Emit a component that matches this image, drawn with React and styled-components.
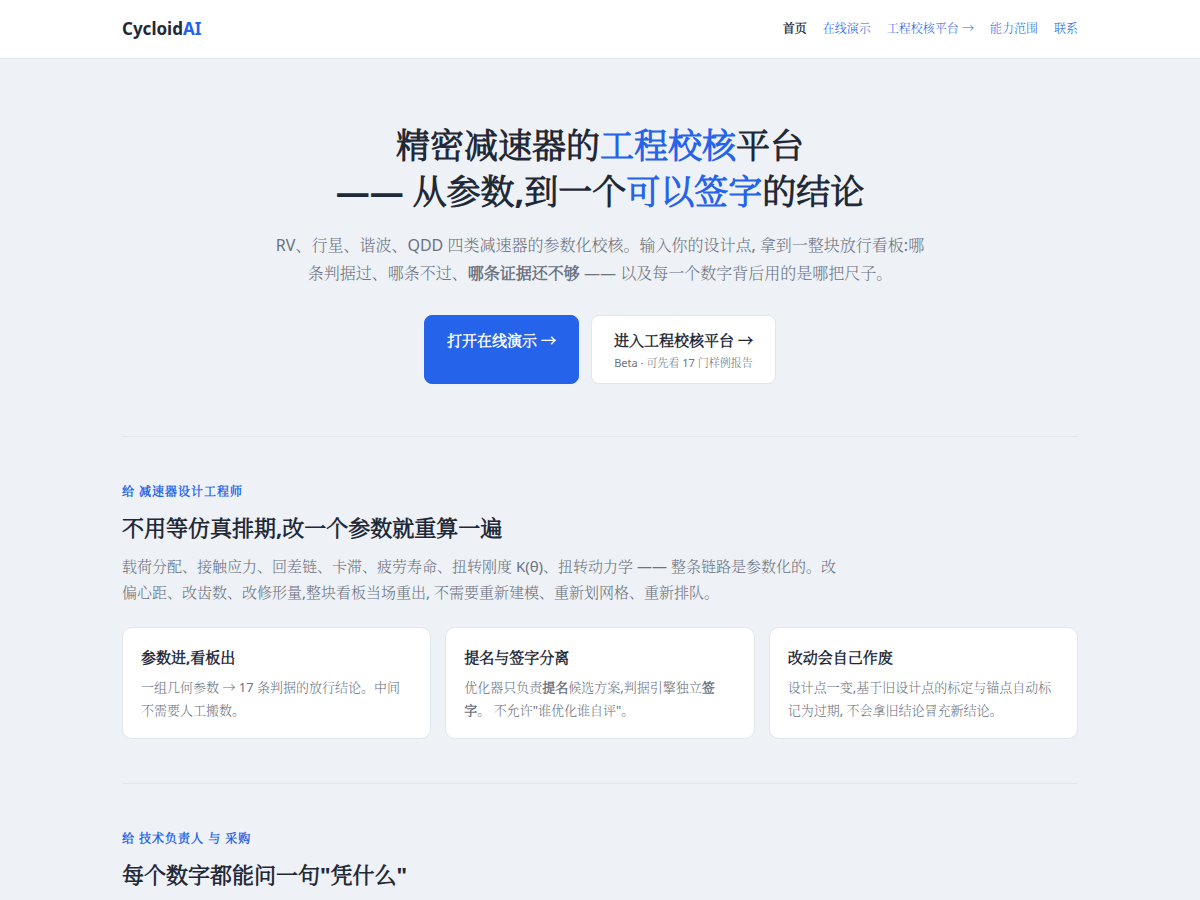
import React from "react";
import styled, { createGlobalStyle } from "styled-components";

const GlobalStyle = createGlobalStyle`
    * {
        box-sizing: border-box;
    }

    body {
        margin: 0;
        background: #eef1f6;
        color: #1f2937;
        font-family: "Noto Sans", "Noto Serif CJK SC Light", "Noto Sans CJK SC", sans-serif;
        font-size: 15px;
        line-height: 26px;
    }

    h1, h2, h3, p {
        margin: 0;
    }

    a {
        color: #2563eb;
        text-decoration: none;
    }
`;

const Header = styled.header`
    background: #fff;
    border-bottom: 1px solid #e2e6ed;
`;

const HeaderInner = styled.div`
    display: flex;
    align-items: center;
    justify-content: space-between;
    max-width: 1000px;
    margin: 0 auto;
    padding: 16px 22px;
`;

const Logo = styled.div`
    font-size: 17px;
    font-weight: 700;
`;

const Accent = styled.span`
    color: #2563eb;
`;

const Nav = styled.nav`
    display: flex;
    gap: 16px;
`;

const NavLink = styled.a`
    font-size: 12px;
    color: ${({ $active }) => ($active ? "#1f2937" : "#2563eb")};
    font-weight: ${({ $active }) => ($active ? 600 : 400)};
`;

const Main = styled.main`
    max-width: 1000px;
    margin: 0 auto;
    padding: 0 22px;
`;

const Hero = styled.section`
    display: flex;
    flex-direction: column;
    align-items: center;
    padding: 63px 0 52px;
    text-align: center;
`;

const Title = styled.h1`
    font-size: 34px;
    font-weight: 700;
    line-height: 46px;
`;

const Lead = styled.p`
    max-width: 660px;
    margin-top: 17px;
    color: #6b7280;
    font-size: 16px;
    line-height: 28px;
`;

const Actions = styled.div`
    display: flex;
    gap: 12px;
    margin-top: 28px;
`;

const Action = styled.a`
    padding: 11px 22px;
    border: 1px solid ${({ $primary }) => ($primary ? "#2563eb" : "#e2e6ed")};
    border-radius: 8px;
    background: ${({ $primary }) => ($primary ? "#2563eb" : "#fff")};
    color: ${({ $primary }) => ($primary ? "#fff" : "#1f2937")};
    font-weight: 600;
`;

const ActionNote = styled.small`
    display: block;
    color: #6b7280;
    font-size: 11px;
    font-weight: 400;
    line-height: 19px;
`;

const Section = styled.section`
    padding: 44px 0;
    border-top: 1px solid #e2e6ed;
`;

const Kicker = styled.p`
    color: #2563eb;
    font-size: 12px;
    font-weight: 700;
    line-height: 22px;
    letter-spacing: 1px;
`;

const Heading = styled.h2`
    margin-top: 6px;
    font-size: 22px;
    font-weight: 700;
    line-height: 37px;
`;

const Text = styled.p`
    max-width: 720px;
    margin-top: 7px;
    color: #6b7280;
`;

const Cards = styled.div`
    display: grid;
    grid-template-columns: repeat(3, 1fr);
    gap: 14px;
    margin-top: 22px;
`;

const Card = styled.article`
    padding: 16px 18px;
    border: 1px solid #e2e6ed;
    border-radius: 10px;
    background: #fff;
`;

const CardTitle = styled.h3`
    font-size: 15px;
    font-weight: 700;
`;

const CardText = styled.p`
    margin-top: 6px;
    color: #6b7280;
    font-size: 13px;
    line-height: 23px;
`;

const links = [
    { label: "首页", href: "#home", active: true },
    { label: "在线演示", href: "#demo" },
    { label: "工程校核平台 →", href: "#platform" },
    { label: "能力范围", href: "#scope" },
    { label: "联系", href: "#contact" },
];

const App = () => {
    return (
        <>
            <GlobalStyle />
            <Header lang="zh-CN">
                <HeaderInner>
                    <Logo>
                        Cycloid<Accent>AI</Accent>
                    </Logo>
                    <Nav>
                        {links.map((link) => (
                            <NavLink key={link.href} href={link.href} $active={link.active}>
                                {link.label}
                            </NavLink>
                        ))}
                    </Nav>
                </HeaderInner>
            </Header>

            <Main lang="zh-CN">
                <Hero id="home">
                    <Title>
                        精密减速器的<Accent>工程校核</Accent>平台
                        <br />
                        —— 从参数,到一个<Accent>可以签字</Accent>的结论
                    </Title>
                    <Lead>
                        RV、行星、谐波、QDD 四类减速器的参数化校核。输入你的设计点,
                        拿到一整块放行看板:哪条判据过、哪条不过、<b>哪条证据还不够</b> ——
                        以及每一个数字背后用的是哪把尺子。
                    </Lead>
                    <Actions>
                        <Action href="#demo" $primary>
                            打开在线演示 →
                        </Action>
                        <Action href="#platform">
                            进入工程校核平台 →
                            <ActionNote>Beta · 可先看 17 门样例报告</ActionNote>
                        </Action>
                    </Actions>
                </Hero>

                <Section>
                    <Kicker>给 减速器设计工程师</Kicker>
                    <Heading>不用等仿真排期,改一个参数就重算一遍</Heading>
                    <Text>
                        载荷分配、接触应力、回差链、卡滞、疲劳寿命、扭转刚度 K(θ)、扭转动力学 ——
                        整条链路是参数化的。改偏心距、改齿数、改修形量,整块看板当场重出,
                        不需要重新建模、重新划网格、重新排队。
                    </Text>
                    <Cards>
                        <Card>
                            <CardTitle>参数进,看板出</CardTitle>
                            <CardText>
                                一组几何参数 → 17 条判据的放行结论。中间不需要人工搬数。
                            </CardText>
                        </Card>
                        <Card>
                            <CardTitle>提名与签字分离</CardTitle>
                            <CardText>
                                优化器只负责<b>提名</b>候选方案,判据引擎独立<b>签字</b>。
                                不允许"谁优化谁自评"。
                            </CardText>
                        </Card>
                        <Card>
                            <CardTitle>改动会自己作废</CardTitle>
                            <CardText>
                                设计点一变,基于旧设计点的标定与锚点自动标记为过期,
                                不会拿旧结论冒充新结论。
                            </CardText>
                        </Card>
                    </Cards>
                </Section>

                <Section>
                    <Kicker>给 技术负责人 与 采购</Kicker>
                    <Heading>每个数字都能问一句"凭什么"</Heading>
                </Section>
            </Main>
        </>
    );
};

export default App;
